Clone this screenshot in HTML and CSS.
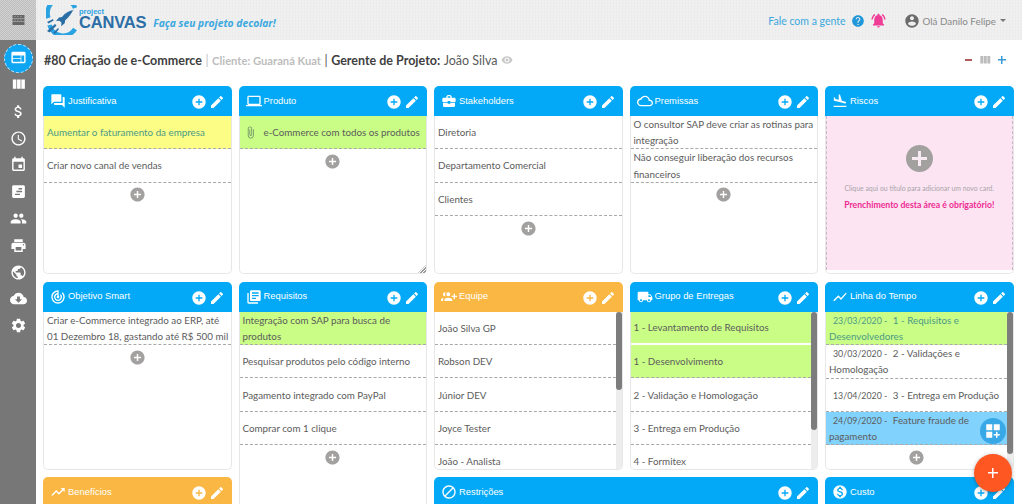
FILE: index.html
```html
<!DOCTYPE html>
<html lang="pt-BR">
<head>
<meta charset="utf-8">
<title>Project Canvas</title>
<link rel="stylesheet" href="styles.css">
</head>
<body>
<svg class="sprite" xmlns="http://www.w3.org/2000/svg">
<symbol id="add" viewBox="0 0 24 24"><path d="M12 2C6.48 2 2 6.48 2 12s4.48 10 10 10 10-4.48 10-10S17.52 2 12 2zm5 11h-4v4h-2v-4H7v-2h4V7h2v4h4v2z"/></symbol>
<symbol id="edit" viewBox="0 0 24 24"><path d="M3 17.25V21h3.75L17.81 9.94l-3.75-3.75L3 17.25zM20.71 7.04c.39-.39.39-1.02 0-1.41l-2.34-2.34c-.39-.39-1.02-.39-1.41 0l-1.83 1.83 3.75 3.75 1.83-1.83z"/></symbol>
<symbol id="forum" viewBox="0 0 24 24"><path d="M21 6h-2v9H6v2c0 .55.45 1 1 1h11l4 4V7c0-.55-.45-1-1-1zm-4 6V3c0-.55-.45-1-1-1H3c-.55 0-1 .45-1 1v14l4-4h10c.55 0 1-.45 1-1z"/></symbol>
<symbol id="laptop" viewBox="0 0 24 24"><path d="M20 18c1.1 0 1.99-.9 1.99-2L22 6c0-1.1-.9-2-2-2H4c-1.1 0-2 .9-2 2v10c0 1.1.9 2 2 2H0v2h24v-2h-4zM4 6h16v10H4V6z"/></symbol>
<symbol id="case" viewBox="0 0 24 24"><path d="M10 16v-1H3.01L3 19c0 1.11.89 2 2 2h14c1.11 0 2-.89 2-2v-4h-7v1h-4zm10-9h-4.01V5l-2-2h-4l-2 2v2H4c-1.1 0-2 .9-2 2v3c0 1.11.89 2 2 2h6v-2h4v2h6c1.1 0 2-.9 2-2V9c0-1.1-.9-2-2-2zm-6 0h-4V5h4v2z"/></symbol>
<symbol id="cloud" viewBox="0 0 24 24"><path d="M19.35 10.04C18.67 6.59 15.64 4 12 4 9.11 4 6.6 5.64 5.35 8.04 2.34 8.36 0 10.91 0 14c0 3.31 2.69 6 6 6h13c2.76 0 5-2.24 5-5 0-2.64-2.05-4.78-4.65-4.96zM19 18H6c-2.21 0-4-1.79-4-4s1.79-4 4-4h.71C7.37 7.69 9.48 6 12 6c3.04 0 5.5 2.46 5.5 5.5v.5H19c1.66 0 3 1.34 3 3s-1.34 3-3 3z"/></symbol>
<symbol id="land" viewBox="0 0 24 24"><path d="M2.5 19h19v2h-19zm7.18-5.73l4.35 1.16 5.31 1.42c.8.21 1.62-.26 1.84-1.06.21-.8-.26-1.62-1.06-1.84l-5.31-1.42-2.76-9.02L10.12 2v8.28L5.15 8.95l-.93-2.32-1.45-.39v5.17l1.6.43 5.31 1.43z"/></symbol>
<symbol id="target" viewBox="0 0 24 24"><path d="M19.07 4.93l-1.41 1.41C19.1 7.79 20 9.79 20 12c0 4.42-3.58 8-8 8s-8-3.58-8-8c0-4.08 3.05-7.44 7-7.93v2.02C8.16 6.57 6 9.03 6 12c0 3.31 2.69 6 6 6s6-2.69 6-6c0-1.66-.67-3.16-1.76-4.24l-1.41 1.41C15.55 9.9 16 10.9 16 12c0 2.21-1.79 4-4 4s-4-1.79-4-4c0-1.86 1.28-3.41 3-3.86v2.14c-.6.35-1 .98-1 1.72 0 1.1.9 2 2 2s2-.9 2-2c0-.74-.4-1.38-1-1.72V2h-1C6.48 2 2 6.48 2 12s4.48 10 10 10 10-4.48 10-10c0-2.76-1.12-5.26-2.93-7.07z"/></symbol>
<symbol id="books" viewBox="0 0 24 24"><path d="M4 6H2v14c0 1.1.9 2 2 2h14v-2H4V6zm16-4H8c-1.1 0-2 .9-2 2v12c0 1.1.9 2 2 2h12c1.1 0 2-.9 2-2V4c0-1.1-.9-2-2-2zm-1 9H9V9h10v2zm-4 4H9v-2h6v2zm4-8H9V5h10v2z"/></symbol>
<symbol id="team" viewBox="0 0 24 24"><path transform="matrix(-1 0 0 1 24 0)" d="M8 10H5V7H3v3H0v2h3v3h2v-3h3v-2zm10 1c1.66 0 2.99-1.34 2.99-3S19.66 5 18 5c-.32 0-.63.05-.91.14.57.81.9 1.79.9 2.86s-.34 2.04-.9 2.86c.28.09.59.14.91.14zm-5 0c1.66 0 2.99-1.34 2.99-3S14.66 5 13 5s-3 1.34-3 3 1.34 3 3 3zm6.62 2.16c.83.73 1.38 1.66 1.38 2.84v2h3v-2c0-1.54-2.37-2.49-4.38-2.84zM13 13c-2 0-6 1-6 3v2h12v-2c0-2-4-3-6-3z"/></symbol>
<symbol id="truck" viewBox="0 0 24 24"><path d="M20 8h-3V4H3c-1.1 0-2 .9-2 2v11h2c0 1.66 1.34 3 3 3s3-1.34 3-3h6c0 1.66 1.34 3 3 3s3-1.34 3-3h2v-5l-3-4zM6 18.500c-.83 0-1.500-.67-1.500-1.500s.67-1.500 1.500-1.500 1.500.67 1.500 1.500-.67 1.500-1.500 1.500zm13.500-9l1.960 2.500H17V9.500h2.500zm-1.500 9c-.83 0-1.500-.67-1.500-1.500s.67-1.500 1.500-1.500 1.500.67 1.500 1.500-.67 1.500-1.500 1.500z"/></symbol>
<symbol id="chart" viewBox="0 0 24 24"><path d="M3.500 18.490l6-6.010 4 4L22 6.920l-1.410-1.410-7.090 7.970-4-4L2 16.990z"/></symbol>
<symbol id="trend" viewBox="0 0 24 24"><path d="M16 6l2.290 2.290-4.880 4.880-4-4L2 16.590 3.410 18l6-6 4 4 6.300-6.290L22 12V6z"/></symbol>
<symbol id="block" viewBox="0 0 24 24"><path d="M12 2C6.48 2 2 6.48 2 12s4.48 10 10 10 10-4.48 10-10S17.52 2 12 2zM4 12c0-4.42 3.58-8 8-8 1.85 0 3.55.63 4.9 1.69L5.69 16.9C4.63 15.55 4 13.85 4 12zm8 8c-1.85 0-3.55-.63-4.9-1.69L18.31 7.1C19.37 8.45 20 10.15 20 12c0 4.42-3.58 8-8 8z"/></symbol>
<symbol id="coin" viewBox="0 0 24 24"><path d="M12 2C6.48 2 2 6.48 2 12s4.48 10 10 10 10-4.48 10-10S17.52 2 12 2zm1.41 16.09V20h-2.67v-1.93c-1.71-.36-3.16-1.46-3.27-3.4h1.96c.1 1.05.82 1.87 2.65 1.87 1.96 0 2.4-.98 2.4-1.59 0-.83-.44-1.61-2.67-2.14-2.48-.6-4.18-1.62-4.18-3.67 0-1.72 1.39-2.84 3.11-3.21V4h2.67v1.95c1.86.45 2.79 1.86 2.85 3.39H14.3c-.05-1.11-.64-1.87-2.22-1.87-1.5 0-2.4.68-2.4 1.64 0 .84.65 1.39 2.67 1.91s4.18 1.39 4.18 3.91c-.01 1.83-1.38 2.83-3.12 3.16z"/></symbol>
<symbol id="columns" viewBox="0 0 24 24"><path d="M10 18h5V5h-5v13zm-6 0h5V5H4v13zM16 5v13h5V5h-5z"/></symbol>
<symbol id="money" viewBox="0 0 24 24"><path d="M11.8 10.9c-2.27-.59-3-1.2-3-2.15 0-1.09 1.01-1.85 2.7-1.85 1.78 0 2.44.85 2.5 2.1h2.21c-.07-1.72-1.12-3.3-3.21-3.81V3h-3v2.16c-1.94.42-3.5 1.68-3.5 3.61 0 2.31 1.91 3.46 4.7 4.13 2.5.6 3 1.48 3 2.41 0 .69-.49 1.79-2.7 1.79-2.06 0-2.87-.92-2.98-2.1h-2.2c.12 2.19 1.76 3.42 3.68 3.83V21h3v-2.15c1.95-.37 3.5-1.5 3.5-3.55 0-2.84-2.43-3.81-4.7-4.4z"/></symbol>
<symbol id="clock" viewBox="0 0 24 24"><path d="M11.99 2C6.47 2 2 6.48 2 12s4.47 10 9.99 10C17.52 22 22 17.52 22 12S17.52 2 11.99 2zM12 20c-4.42 0-8-3.58-8-8s3.58-8 8-8 8 3.58 8 8-3.58 8-8 8zm.5-13H11v6l5.25 3.15.75-1.23-4.5-2.67z"/></symbol>
<symbol id="event" viewBox="0 0 24 24"><path d="M17 12h-5v5h5v-5zM16 1v2H8V1H6v2H5c-1.11 0-1.99.9-1.99 2L3 19c0 1.1.89 2 2 2h14c1.1 0 2-.9 2-2V5c0-1.1-.9-2-2-2h-1V1h-2zm3 18H5V8h14v11z"/></symbol>
<symbol id="note" viewBox="0 0 24 24"><path d="M19 3H5c-1.1 0-2 .9-2 2v14c0 1.1.9 2 2 2h14c1.1 0 2-.9 2-2V5c0-1.1-.9-2-2-2zm-5 14H7v-2h7v2zm3-4H9v-2h8v2zm0-4h-5V7h5v2z"/></symbol>
<symbol id="people" viewBox="0 0 24 24"><path d="M16 11c1.66 0 2.99-1.34 2.99-3S17.66 5 16 5c-1.66 0-3 1.34-3 3s1.34 3 3 3zm-8 0c1.66 0 2.99-1.34 2.99-3S9.66 5 8 5C6.34 5 5 6.34 5 8s1.34 3 3 3zm0 2c-2.33 0-7 1.17-7 3.5V19h14v-2.5c0-2.33-4.67-3.5-7-3.5zm8 0c-.29 0-.62.02-.97.05 1.16.84 1.97 1.97 1.97 3.45V19h6v-2.5c0-2.33-4.67-3.5-7-3.5z"/></symbol>
<symbol id="print" viewBox="0 0 24 24"><path d="M19 8H5c-1.66 0-3 1.34-3 3v6h4v4h12v-4h4v-6c0-1.66-1.34-3-3-3zm-3 11H8v-5h8v5zm3-7c-.55 0-1-.45-1-1s.45-1 1-1 1 .45 1 1-.45 1-1 1zm-1-9H6v4h12V3z"/></symbol>
<symbol id="globe" viewBox="0 0 24 24"><path d="M12 2C6.48 2 2 6.48 2 12s4.48 10 10 10 10-4.48 10-10S17.52 2 12 2zm-1 17.93c-3.95-.49-7-3.85-7-7.93 0-.62.08-1.21.21-1.79L9 15v1c0 1.1.9 2 2 2v1.93zm6.9-2.54c-.26-.81-1-1.39-1.9-1.39h-1v-3c0-.55-.45-1-1-1H8v-2h2c.55 0 1-.45 1-1V7h2c1.1 0 2-.9 2-2v-.41c2.93 1.19 5 4.06 5 7.41 0 2.08-.8 3.97-2.1 5.39z"/></symbol>
<symbol id="download" viewBox="0 0 24 24"><path d="M19.35 10.04C18.67 6.59 15.64 4 12 4 9.11 4 6.6 5.64 5.35 8.04 2.34 8.36 0 10.91 0 14c0 3.31 2.69 6 6 6h13c2.76 0 5-2.24 5-5 0-2.64-2.05-4.78-4.65-4.96zM17 13l-5 5-5-5h3V9h4v4h3z"/></symbol>
<symbol id="gear" viewBox="0 0 24 24"><path d="M19.14 12.94c.04-.3.06-.61.06-.94 0-.32-.02-.64-.07-.94l2.03-1.58c.18-.14.23-.41.12-.61l-1.92-3.32c-.12-.22-.37-.29-.59-.22l-2.39.96c-.5-.38-1.03-.7-1.62-.94l-.36-2.54c-.04-.24-.24-.41-.48-.41h-3.84c-.24 0-.43.17-.47.41l-.36 2.54c-.59.24-1.13.57-1.62.94l-2.39-.96c-.22-.08-.47 0-.59.22L2.74 8.87c-.12.21-.08.47.12.61l2.03 1.58c-.05.3-.09.63-.09.94s.02.64.07.94l-2.03 1.58c-.18.14-.23.41-.12.61l1.92 3.32c.12.22.37.29.59.22l2.39-.96c.5.38 1.03.7 1.62.94l.36 2.54c.05.24.24.41.48.41h3.84c.24 0 .44-.17.47-.41l.36-2.54c.59-.24 1.13-.56 1.62-.94l2.39.96c.22.08.47 0 .59-.22l1.92-3.32c.12-.22.07-.47-.12-.61l-2.01-1.58zM12 15.6c-1.98 0-3.6-1.62-3.6-3.6s1.62-3.6 3.6-3.6 3.6 1.62 3.6 3.6-1.62 3.6-3.6 3.6z"/></symbol>
<symbol id="clip" viewBox="0 0 24 24"><path d="M16.5 6v11.5c0 2.21-1.79 4-4 4s-4-1.79-4-4V5c0-1.38 1.12-2.5 2.5-2.5s2.5 1.12 2.5 2.5v10.5c0 .55-.45 1-1 1s-1-.45-1-1V6H10v9.5c0 1.38 1.12 2.5 2.5 2.5s2.5-1.12 2.5-2.5V5c0-2.21-1.79-4-4-4S7 2.79 7 5v12.5c0 3.04 2.46 5.5 5.5 5.5s5.5-2.46 5.5-5.5V6h-1.5z"/></symbol>
<symbol id="help" viewBox="0 0 24 24"><path d="M12 2C6.48 2 2 6.48 2 12s4.48 10 10 10 10-4.48 10-10S17.52 2 12 2zm1 17h-2v-2h2v2zm2.07-7.75l-.9.92C13.45 12.9 13 13.5 13 15h-2v-.5c0-1.1.45-2.1 1.17-2.83l1.24-1.26c.37-.36.59-.86.59-1.41 0-1.1-.9-2-2-2s-2 .9-2 2H8c0-2.21 1.79-4 4-4s4 1.79 4 4c0 .88-.36 1.68-.93 2.25z"/></symbol>
<symbol id="bell" viewBox="0 0 24 24"><path d="M7.58 4.08L6.15 2.65C3.75 4.48 2.17 7.3 2.03 10.5h2c.15-2.65 1.51-4.97 3.55-6.42zm12.39 6.42h2c-.15-3.2-1.73-6.02-4.12-7.85l-1.42 1.43c2.02 1.45 3.39 3.77 3.54 6.42zM18 11c0-3.07-1.64-5.64-4.5-6.32V4c0-.83-.67-1.5-1.5-1.5s-1.5.67-1.5 1.5v.68C7.63 5.36 6 7.92 6 11v5l-2 2v1h16v-1l-2-2v-5zm-6 11c.14 0 .27-.01.4-.04.65-.14 1.18-.58 1.44-1.18.1-.24.15-.5.15-.78h-4c.01 1.1.9 2 2.01 2z"/></symbol>
<symbol id="user" viewBox="0 0 24 24"><path d="M12 2C6.48 2 2 6.48 2 12s4.48 10 10 10 10-4.48 10-10S17.52 2 12 2zm0 3c1.66 0 3 1.34 3 3s-1.34 3-3 3-3-1.34-3-3 1.34-3 3-3zm0 14.2c-2.5 0-4.71-1.28-6-3.22.03-1.99 4-3.08 6-3.08 1.99 0 5.97 1.09 6 3.08-1.29 1.94-3.5 3.22-6 3.22z"/></symbol>
<symbol id="eye" viewBox="0 0 24 24"><path d="M12 4.5C7 4.5 2.73 7.61 1 12c1.73 4.39 6 7.5 11 7.5s9.27-3.11 11-7.5c-1.73-4.39-6-7.5-11-7.5zM12 17c-2.76 0-5-2.24-5-5s2.24-5 5-5 5 2.24 5 5-2.24 5-5 5zm0-8c-1.66 0-3 1.34-3 3s1.34 3 3 3 3-1.34 3-3-1.34-3-3-3z"/></symbol>
<symbol id="web" viewBox="0 0 24 24"><path d="M20 4H4c-1.1 0-1.99.9-1.99 2L2 18c0 1.1.9 2 2 2h16c1.1 0 2-.9 2-2V6c0-1.1-.9-2-2-2zm-5 14H4v-4h11v4zm0-5H4V9h11v4zm5 5h-4V9h4v9z"/></symbol>
<symbol id="dash" viewBox="0 0 24 24"><path d="M3 3h8v8H3zM13 3h8v8h-8zM3 13h8v8H3zM16 13h2v3h3v2h-3v3h-2v-3h-3v-2h3z"/></symbol>
</svg>

<header class="topbar">
  <div class="menu-cell"><svg class="menu-icon" viewBox="0 0 12 10"><path d="M0 0h12v3H0zM0 3.500h12v3H0zM0 7h12v3H0z"/><path class="menu-dots" d="M2 4.500h1v1H2zM5 4.500h1v1H5zM8 4.500h1v1H8zM2 1h1v1H2zM5 1h1v1H5zM8 1h1v1H8z"/></svg></div>
  <div class="brand">
    <svg class="logo" viewBox="0 0 33 30">
      <path class="logo-arc" d="M29 3A14 14 0 0 0 2.500 13"/>
      <path class="logo-arc" d="M3.500 20A14 14 0 0 0 29 24"/>
      <path class="logo-rocket" d="M28 5c-5 .6-9 3-12 7l-3 .5-3 3.500 3.500-.3 2 2-.3 3.500 3.500-3 .5-3c4-3 6.500-7 8.300-10.700z"/>
      <path class="logo-trail" d="M1 26l8-7 1.500 1.500-7 7zM1 17l6-3 .6 1.500-5 3zM7 28l5-5 1 1-4 5z"/>
    </svg>
    <div class="wordmark"><span class="word-small">project</span><span class="word-big">CANVAS</span></div>
    <span class="tagline">Faça seu projeto decolar!</span>
  </div>
  <div class="top-right">
    <a class="talk">Fale com a gente</a>
    <svg class="top-help"><use href="#help"/></svg>
    <svg class="top-bell"><use href="#bell"/></svg>
    <svg class="top-user"><use href="#user"/></svg>
    <span class="hello">Olá Danilo Felipe</span>
    <span class="caret"></span>
  </div>
</header>

<div class="shell">
  <nav class="sidebar">
    <a class="nav-item nav-active"><svg><use href="#web"/></svg></a>
    <a class="nav-item"><svg><use href="#columns"/></svg></a>
    <a class="nav-item"><svg><use href="#money"/></svg></a>
    <a class="nav-item"><svg><use href="#clock"/></svg></a>
    <a class="nav-item"><svg><use href="#event"/></svg></a>
    <a class="nav-item"><svg><use href="#note"/></svg></a>
    <a class="nav-item"><svg><use href="#people"/></svg></a>
    <a class="nav-item"><svg><use href="#print"/></svg></a>
    <a class="nav-item"><svg><use href="#globe"/></svg></a>
    <a class="nav-item"><svg><use href="#download"/></svg></a>
    <a class="nav-item"><svg><use href="#gear"/></svg></a>
  </nav>

  <main class="content">
    <div class="titlebar">
      <h1 class="project"><span>#80 Criação de e-Commerce</span><span class="sep">|</span><span class="client">Cliente: Guaraná Kuat</span><span class="sep-dark">|</span><span>Gerente de Projeto:</span><span class="manager">João Silva</span><svg class="eye"><use href="#eye"/></svg></h1>
      <div class="zoomer"><span class="zoom-minus"></span><svg class="zoom-cols"><use href="#columns"/></svg><span class="zoom-plus"></span></div>
    </div>

    <div class="board">
      <section class="card">
        <div class="head"><svg class="head-ic"><use href="#forum"/></svg><h2>Justificativa</h2><svg class="act"><use href="#add"/></svg><svg class="act"><use href="#edit"/></svg></div>
        <div class="body">
          <div class="item yellow tinted">Aumentar o faturamento da empresa</div>
          <div class="item">Criar novo canal de vendas</div>
          <div class="more"><svg><use href="#add"/></svg></div>
        </div>
      </section>

      <section class="card">
        <div class="head"><svg class="head-ic"><use href="#laptop"/></svg><h2>Produto</h2><svg class="act"><use href="#add"/></svg><svg class="act"><use href="#edit"/></svg></div>
        <div class="body">
          <div class="item green"><svg class="clip"><use href="#clip"/></svg><span>e-Commerce com todos os produtos</span></div>
          <div class="more"><svg><use href="#add"/></svg></div>
        </div>
        <span class="grip"></span>
      </section>

      <section class="card">
        <div class="head"><svg class="head-ic"><use href="#case"/></svg><h2>Stakeholders</h2><svg class="act"><use href="#add"/></svg><svg class="act"><use href="#edit"/></svg></div>
        <div class="body">
          <div class="item">Diretoria</div>
          <div class="item">Departamento Comercial</div>
          <div class="item">Clientes</div>
          <div class="more"><svg><use href="#add"/></svg></div>
        </div>
      </section>

      <section class="card">
        <div class="head"><svg class="head-ic"><use href="#cloud"/></svg><h2>Premissas</h2><svg class="act"><use href="#add"/></svg><svg class="act"><use href="#edit"/></svg></div>
        <div class="body">
          <div class="item">O consultor SAP deve criar as rotinas para integração</div>
          <div class="item">Não conseguir liberação dos recursos financeiros</div>
          <div class="more"><svg><use href="#add"/></svg></div>
        </div>
      </section>

      <section class="card">
        <div class="head"><svg class="head-ic"><use href="#land"/></svg><h2>Riscos</h2><svg class="act"><use href="#add"/></svg><svg class="act"><use href="#edit"/></svg></div>
        <div class="body">
          <div class="empty">
            <svg class="empty-add" viewBox="0 0 27 27"><circle cx="13.500" cy="13.500" r="13.500"/><path d="M12 6h3v6h6v3h-6v6h-3v-6H6v-3h6z"/></svg>
            <p class="empty-hint">Clique aqui ou título para adicionar um novo card.</p>
            <p class="empty-req">Prenchimento desta área é obrigatório!</p>
          </div>
        </div>
      </section>

      <section class="card">
        <div class="head"><svg class="head-ic"><use href="#target"/></svg><h2>Objetivo Smart</h2><svg class="act"><use href="#add"/></svg><svg class="act"><use href="#edit"/></svg></div>
        <div class="body">
          <div class="item">Criar e-Commerce integrado ao ERP, até 01 Dezembro 18, gastando até R$ 500 mil</div>
          <div class="more"><svg><use href="#add"/></svg></div>
        </div>
      </section>

      <section class="card tall">
        <div class="head"><svg class="head-ic"><use href="#books"/></svg><h2>Requisitos</h2><svg class="act"><use href="#add"/></svg><svg class="act"><use href="#edit"/></svg></div>
        <div class="body">
          <div class="item green">Integração com SAP para busca de produtos</div>
          <div class="item">Pesquisar produtos pelo código interno</div>
          <div class="item">Pagamento integrado com PayPal</div>
          <div class="item">Comprar com 1 clique</div>
          <div class="more"><svg><use href="#add"/></svg></div>
        </div>
      </section>

      <section class="card">
        <div class="head orange"><svg class="head-ic"><use href="#team"/></svg><h2>Equipe</h2><svg class="act"><use href="#add"/></svg><svg class="act"><use href="#edit"/></svg></div>
        <div class="body scroll">
          <div class="list">
            <div class="item">João Silva GP</div>
            <div class="item">Robson DEV</div>
            <div class="item">Júnior DEV</div>
            <div class="item">Joyce Tester</div>
            <div class="item">João - Analista</div>
          </div>
          <div class="track"><div class="thumb thumb-team"></div></div>
        </div>
      </section>

      <section class="card">
        <div class="head"><svg class="head-ic"><use href="#truck"/></svg><h2>Grupo de Entregas</h2><svg class="act"><use href="#add"/></svg><svg class="act"><use href="#edit"/></svg></div>
        <div class="body scroll">
          <div class="list">
            <div class="item green split">1 - Levantamento de Requisitos</div>
            <div class="item green">1 - Desenvolvimento</div>
            <div class="item">2 - Validação e Homologação</div>
            <div class="item">3 - Entrega em Produção</div>
            <div class="item">4 - Formitex</div>
          </div>
          <div class="track"><div class="thumb thumb-group"></div></div>
        </div>
      </section>

      <section class="card">
        <div class="head"><svg class="head-ic"><use href="#chart"/></svg><h2>Linha do Tempo</h2><svg class="act"><use href="#add"/></svg><svg class="act"><use href="#edit"/></svg></div>
        <div class="body scroll">
          <div class="list">
            <div class="item green tinted"><p class="entry"><span class="date">23/03/2020 -</span> 1 - Requisitos e Desenvolvedores</p></div>
            <div class="item"><p class="entry"><span class="date">30/03/2020 -</span> 2 - Validações e Homologação</p></div>
            <div class="item"><p class="entry"><span class="date">13/04/2020 -</span> 3 - Entrega em Produção</p></div>
            <div class="item sky"><p class="entry"><span class="date">24/09/2020 -</span> Feature fraude de pagamento</p></div>
            <div class="more"><svg><use href="#add"/></svg></div>
          </div>
          <div class="track"><div class="thumb thumb-time"></div></div>
        </div>
      </section>

      <section class="card">
        <div class="head orange"><svg class="head-ic"><use href="#trend"/></svg><h2>Benefícios</h2><svg class="act"><use href="#add"/></svg><svg class="act"><use href="#edit"/></svg></div>
        <div class="body"></div>
      </section>

      <section class="card wide">
        <div class="head"><svg class="head-ic"><use href="#block"/></svg><h2>Restrições</h2><svg class="act"><use href="#add"/></svg><svg class="act"><use href="#edit"/></svg></div>
        <div class="body"></div>
      </section>

      <section class="card">
        <div class="head"><svg class="head-ic"><use href="#coin"/></svg><h2>Custo</h2><svg class="act"><use href="#add"/></svg><svg class="act"><use href="#edit"/></svg></div>
        <div class="body"></div>
      </section>
    </div>
  </main>
</div>

<button class="fab fab-blue"><svg><use href="#dash"/></svg></button>
<button class="fab fab-red"><span class="fab-plus"></span></button>
</body>
</html>
```
FILE: styles.css
```css
* { box-sizing: border-box; }
html, body { height: 100%; }
body {
  margin: 0;
  height: 100vh;
  overflow: hidden;
  background: #fff;
  color: #5c5c5c;
  font-family: Lato, "Noto Sans", sans-serif;
  font-size: 10px;
}
.sprite { display: none; }
svg { fill: currentColor; flex: none; }

.topbar {
  display: flex;
  align-items: stretch;
  height: 40px;
  margin-right: 2px;
  background: repeating-conic-gradient(#ececec 0 25%, #f1f1f1 0 50%) 0 0 / 3px 3px;
}
.menu-cell {
  width: 36px;
  background: repeating-conic-gradient(#bdbdbd 0 25%, #d2d2d2 0 50%) 0 0 / 2px 2px;
  display: flex;
  align-items: center;
  justify-content: center;
}
.menu-icon { width: 13px; height: 10px; fill: #666; }
.menu-dots { fill: #aaa; }
.brand { display: flex; align-items: center; padding-left: 10px; flex: 1; }
.logo { width: 33px; height: 30px; }
.logo-arc { fill: none; stroke: #2aa3e3; stroke-width: 4.500; }
.logo-rocket { fill: #2b6ea6; }
.logo-trail { fill: #2b6ea6; }
.wordmark { display: flex; flex-direction: column; line-height: 1; margin-top: -2px; }
.word-small { font: bold 7.500px "Liberation Sans", sans-serif; color: #2aa3e3; height: 6px; }
.word-big { font: bold 16.500px "Liberation Sans", sans-serif; color: #2b6ea6; letter-spacing: -.2px; }
.tagline {
  margin-left: 7px;
  margin-top: 6px;
  font: italic bold 10.300px "Open Sans", sans-serif;
  color: #3ba8de;
}
.top-right { display: flex; align-items: center; padding: 1px 16px 0 0; font-size: 10.500px; }
.talk { color: #3ba8de; }
.top-help { width: 14px; height: 14px; color: #1f97d8; margin-left: 5px; }
.top-bell { width: 17px; height: 17px; color: #ee3c97; margin-left: 5px; }
.top-user { width: 16px; height: 16px; color: #6b6b6b; margin-left: 17px; }
.hello { color: #8a8a8a; margin-left: 3px; font-size: 9.800px; }
.caret { width: 0; height: 0; border: 3px solid transparent; border-top-color: #777; border-bottom: 0; margin-left: 4px; }

.shell { display: flex; height: calc(100vh - 40px); }
.sidebar {
  width: 36px;
  flex: none;
  background: #777777;
  padding-top: 4.300px;
  display: flex;
  flex-direction: column;
  align-items: center;
}
.nav-item {
  height: 26.800px;
  width: 100%;
  display: flex;
  align-items: center;
  justify-content: center;
  color: #fff;
  position: relative;
}
.nav-item svg { width: 17px; height: 17px; position: relative; }
.nav-active::before {
  content: "";
  position: absolute;
  left: 4px;
  top: 0;
  width: 27px;
  height: 27px;
  border-radius: 50%;
  background: #0ea5f2;
  border: 1px dashed #bfe6fb;
}

.content { flex: 1; padding: 0 10.500px 0 7px; overflow: hidden; min-width: 0; }
.titlebar { height: 46px; display: flex; align-items: center; justify-content: space-between; padding: 0 0 6px 1px; }
.project { margin: 0; font-size: 12.500px; font-weight: 700; color: #404040; display: flex; align-items: center; gap: 3.500px; white-space: nowrap; }
.sep { color: #c4c4c4; font-weight: 400; }
.client { color: #bdbdbd; font-weight: 700; font-size: 11.200px; }
.sep-dark { color: #555; font-weight: 400; }
.manager { color: #5a5a5a; font-weight: 400; }
.eye { width: 12px; height: 12px; color: #c8c8c8; }
.zoomer { display: flex; align-items: center; gap: 6px; padding-right: 8px; }
.zoom-minus { width: 7px; height: 1.500px; background: #b25a5a; }
.zoom-cols { width: 14px; height: 14px; color: #bcbcbc; }
.zoom-plus { width: 8px; height: 8px; background: linear-gradient(#3a9bd8, #3a9bd8) center / 100% 1.500px no-repeat, linear-gradient(#3a9bd8, #3a9bd8) center / 1.500px 100% no-repeat; }

.board {
  display: grid;
  grid-template-columns: repeat(5, 1fr);
  grid-auto-rows: 188px;
  gap: 7.700px 7px;
}
.card {
  position: relative;
  display: flex;
  flex-direction: column;
  min-height: 0;
}
.tall { grid-row: span 2; }
.wide { grid-column: span 2; }
.head {
  height: 30px;
  flex: none;
  display: flex;
  align-items: center;
  padding: 0 7px;
  background: #03a9f6;
  color: #fff;
  border-radius: 5px 5px 0 0;
}
.orange { background: #fab744; }
.head-ic { width: 16px; height: 16px; margin-right: 2px; }
.head h2 { flex: 1; margin: 0; font: 400 9.400px "Liberation Sans", sans-serif; padding-bottom: 2px; }
.act { width: 16px; height: 16px; margin-left: 2px; margin-top: 2px; }

.body {
  flex: 1;
  min-height: 0;
  overflow: hidden;
  border: 1px solid #e7e7e7;
  border-top: 0;
  border-radius: 0 0 5px 5px;
}
.item {
  display: flex;
  align-items: center;
  min-height: 33.400px;
  padding: 0 1px 0 3px;
  line-height: 16.200px;
  border-bottom: 1px dashed #a9a9a9;
  font-size: 9.800px;
  color: #5c5c5c;
}
.entry { margin: 0; }
.green { background: #c9fd85; }
.yellow { background: #fbfd85; }
.sky { background: #82d2fe; }
.tinted { color: #4d9a86; }
.split { border-bottom: 2px solid #fff; }
.date { margin-left: 4px; margin-right: 3px; font-size: 8.800px; line-height: 1; }
.clip { width: 13px; height: 15px; margin-right: 7px; margin-left: 1px; color: #6f8f6a; }
.more { height: 25px; display: flex; align-items: center; justify-content: center; color: #a3a0a0; }
.more svg { width: 17px; height: 17px; margin-bottom: 1px; }
.grip {
  position: absolute;
  right: 1px;
  bottom: 1px;
  width: 8px;
  height: 8px;
  background: repeating-linear-gradient(135deg, transparent 0 1px, #999 1px 2px);
  clip-path: polygon(100% 0, 100% 100%, 0 100%);
}

.empty {
  height: 154px;
  background: #fce4f3;
  border-left: 1px dashed #c9b9c5;
  border-right: 1px dashed #c9b9c5;
  display: flex;
  flex-direction: column;
  align-items: center;
  padding-top: 29px;
}
.empty-add { width: 27px; height: 27px; }
.empty-add circle { fill: #a3a0a0; }
.empty-add path { fill: #f7eaf2; }
.empty-hint { margin: 12px 0 0; font-size: 6.900px; color: #a9a5a8; white-space: nowrap; }
.empty-req { margin: 7px 0 0; font-size: 8.700px; font-weight: 700; color: #ee2c92; white-space: nowrap; }

.scroll { display: flex; }
.list { flex: 1; min-width: 0; overflow: hidden; }
.track { flex: none; width: 6px; background: #ededed; }
.thumb { background: #7d7d7d; border-radius: 3px; }
.thumb-team { height: 78px; }
.thumb-group { height: 118px; }
.thumb-time { height: 142px; }

.fab {
  position: fixed;
  border: 0;
  border-radius: 50%;
  padding: 0;
  display: flex;
  align-items: center;
  justify-content: center;
  color: #fff;
}
.fab-blue { right: 18px; top: 418px; width: 26px; height: 26px; background: #38a8e6; }
.fab-blue svg { width: 18px; height: 18px; }
.fab-red { right: 12px; top: 454px; width: 38px; height: 38px; background: #ff5722; box-shadow: 0 1px 4px rgba(0,0,0,.3); }
.fab-plus {
  width: 10px;
  height: 10px;
  background: linear-gradient(#fff, #fff) center / 100% 1.500px no-repeat, linear-gradient(#fff, #fff) center / 1.500px 100% no-repeat;
}
```
